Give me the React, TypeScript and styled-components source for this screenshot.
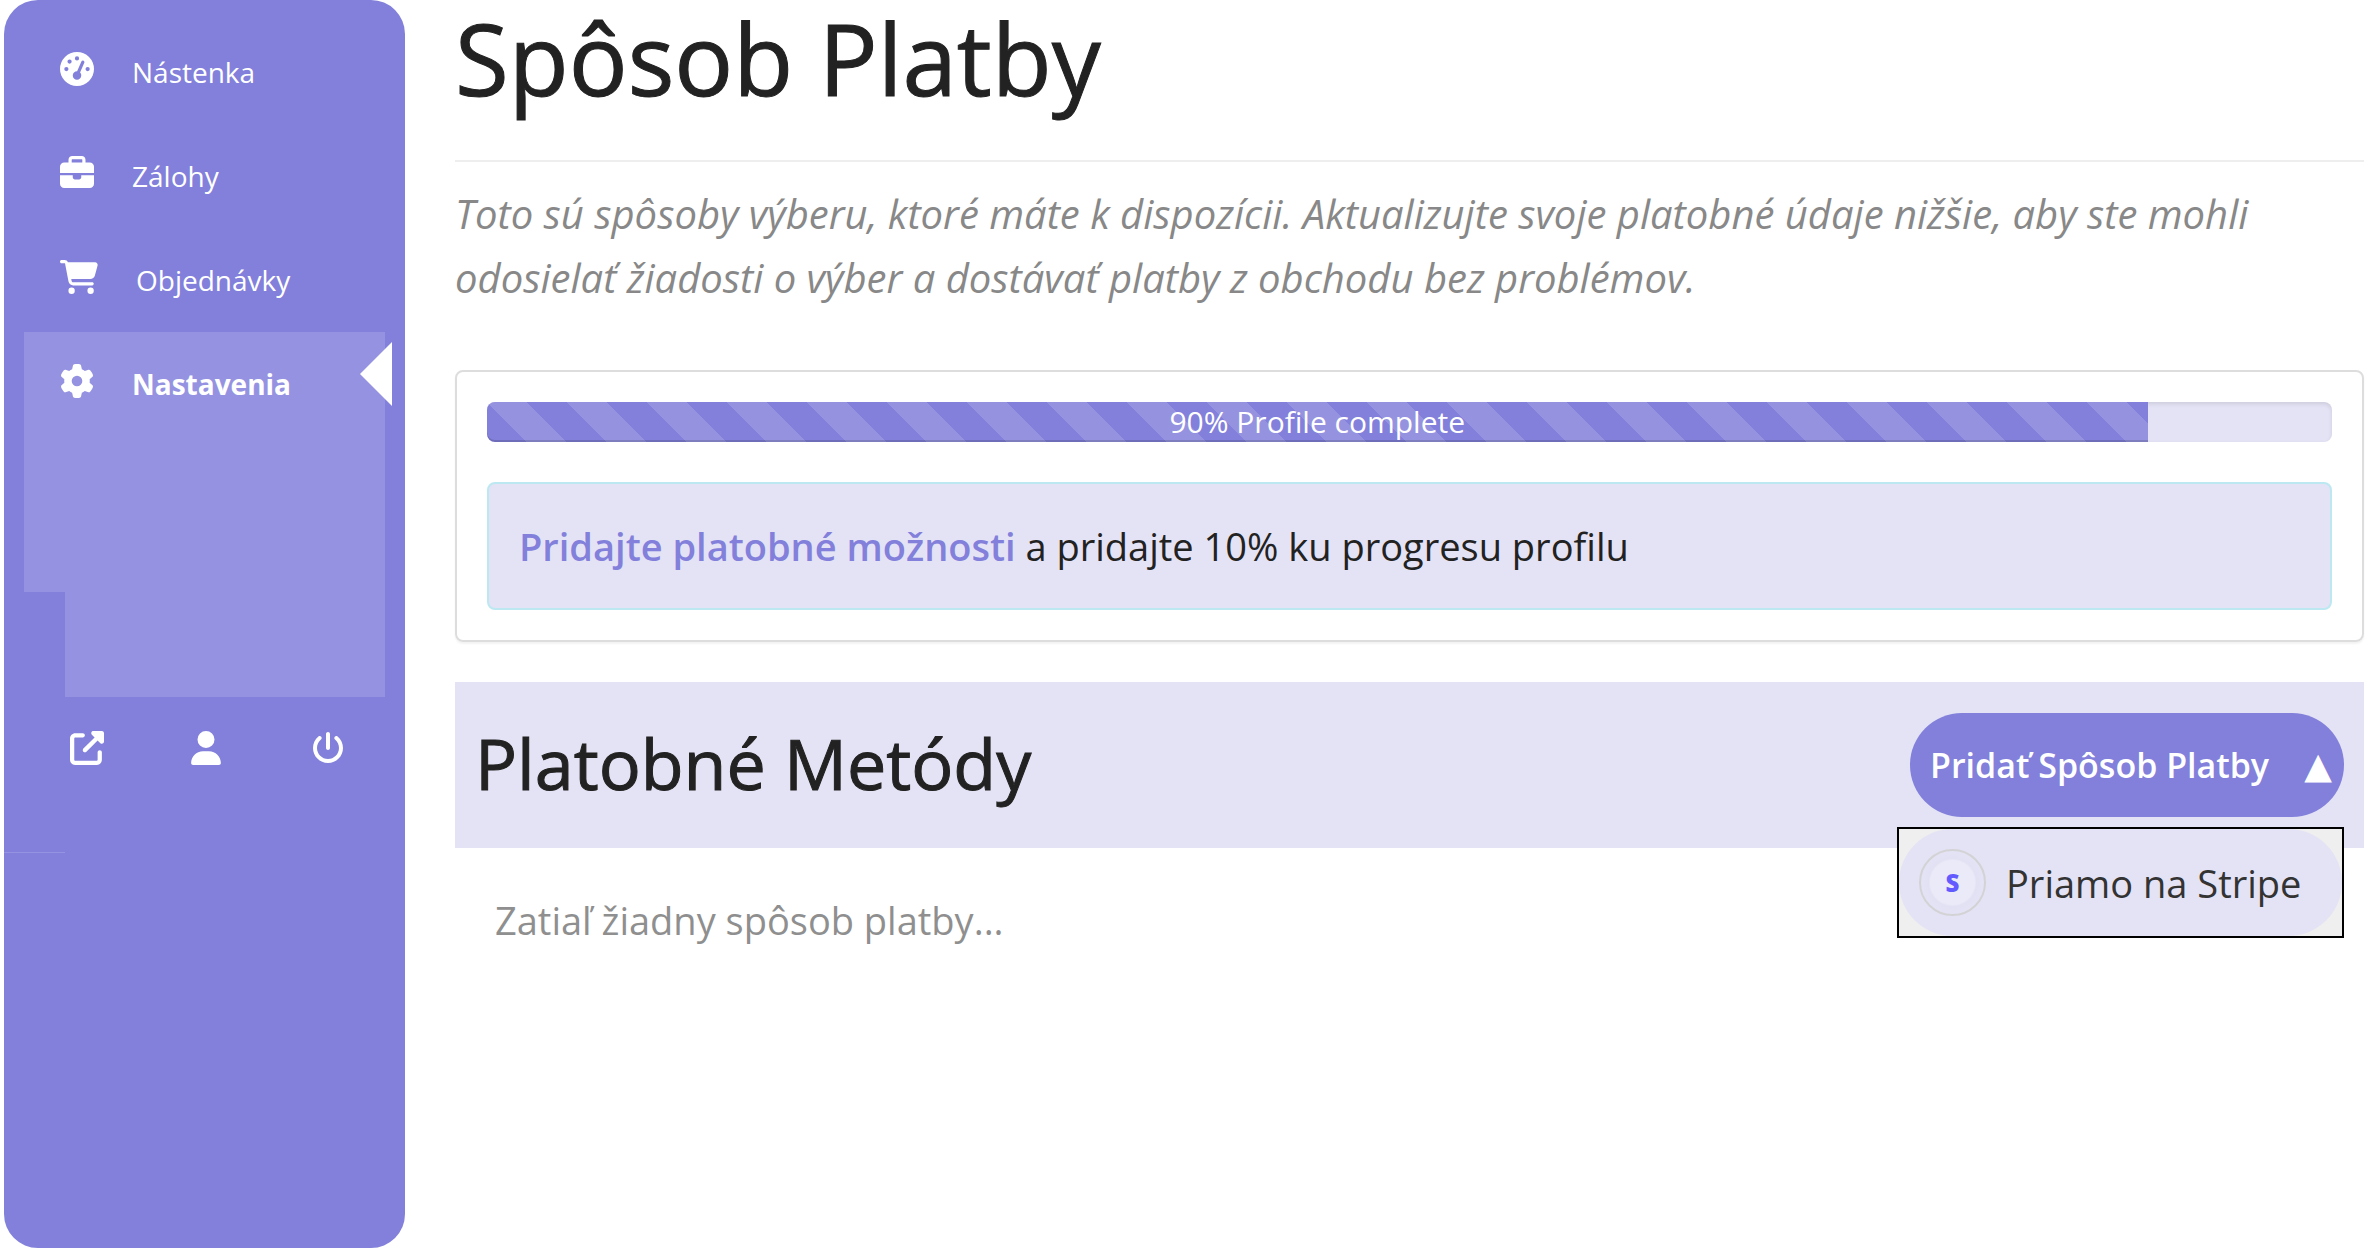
import React from "react";
import styled, { createGlobalStyle, css } from "styled-components";
import {
  FaGaugeHigh,
  FaBriefcase,
  FaCartShopping,
  FaGear,
  FaUpRightFromSquare,
  FaUser,
  FaPowerOff,
} from "react-icons/fa6";

const brand = "#8280db";
const brandLight = "#9593e1";
const tint = "#e4e3f5";

const GlobalStyle = createGlobalStyle`
  *, *::before, *::after { box-sizing: border-box; }
  body {
    margin: 0;
    background: #fff;
    color: #222;
    font-family: "Open Sans", "Noto Sans", sans-serif;
  }
`;

const Page = styled.div`
  display: flex;
  align-items: flex-start;
  gap: 50px;
  padding: 0 4px;
`;

const Sidebar = styled.nav`
  flex: 0 0 401px;
  min-width: 0;
  min-height: calc(100vh - 8px);
  padding-top: 20px;
  border-radius: 34px;
  background: ${brand};
`;

const NavList = styled.ul`
  margin: 0;
  padding: 0 20px;
  list-style: none;
`;

const NavItem = styled.li<{ $active?: boolean }>`
  position: relative;
  ${(p) =>
    p.$active &&
    css`
      height: 260px;
      background: ${brandLight};
      &::after {
        content: "";
        position: absolute;
        top: 10px;
        right: -7px;
        border: 32px solid transparent;
        border-left-width: 0;
        border-right-color: #fff;
      }
    `}
`;

const NavLink = styled.a<{ $active?: boolean; $iconWidth: number }>`
  display: flex;
  align-items: center;
  gap: 38px;
  height: 104px;
  padding-left: 36px;
  color: #fff;
  font-size: 28px;
  font-weight: ${(p) => (p.$active ? 700 : 400)};
  line-height: 40px;
  text-decoration: none;
  svg {
    width: ${(p) => p.$iconWidth}px;
    height: 34px;
    margin-bottom: 6px;
  }
`;

const SubPanel = styled.div`
  height: 105px;
  margin: 0 20px 0 61px;
  background: ${brandLight};
`;

const Shortcuts = styled.div`
  display: grid;
  grid-template-columns: 121px 121px 34px;
  padding: 34px 0 0 66px;
`;

const Shortcut = styled.a<{ $iconWidth: number }>`
  display: block;
  height: 34px;
  color: #fff;
  svg {
    display: block;
    width: ${(p) => p.$iconWidth}px;
    height: 34px;
  }
`;

const SidebarRule = styled.hr`
  width: 61px;
  height: 1px;
  margin: 87px 0 0;
  border: 0;
  background: ${brandLight};
`;

const Main = styled.main`
  flex: 1;
  min-width: 0;
`;

const Title = styled.h1`
  margin: 0;
  padding-bottom: 44px;
  border-bottom: 2px solid #eee;
  font-size: 98px;
  font-weight: 500;
  line-height: 116px;
  -webkit-text-stroke: 1px currentColor;
`;

const Intro = styled.p`
  margin: 20px 0 60px;
  color: #888;
  font-size: 40px;
  font-style: italic;
  line-height: 64px;
`;

const Card = styled.section`
  padding: 30px;
  border: 2px solid #ddd;
  border-radius: 8px;
  box-shadow: 0 2px 2px rgba(0, 0, 0, 0.05);
`;

const Progress = styled.div`
  height: 40px;
  margin-bottom: 40px;
  border-radius: 8px;
  background: ${tint};
  box-shadow: inset 0 2px 4px rgba(0, 0, 0, 0.1);
`;

const ProgressBar = styled.div`
  height: 100%;
  border-radius: 8px 0 0 8px;
  background-color: ${brand};
  background-image: linear-gradient(
    45deg,
    rgba(255, 255, 255, 0.15) 25%,
    transparent 25%,
    transparent 50%,
    rgba(255, 255, 255, 0.15) 50%,
    rgba(255, 255, 255, 0.15) 75%,
    transparent 75%
  );
  background-size: 80px 80px;
  box-shadow: inset 0 -2px 0 rgba(0, 0, 0, 0.15);
  color: #fff;
  font-size: 30px;
  line-height: 40px;
  text-align: center;
`;

const Notice = styled.p`
  margin: 0;
  padding: 30px;
  border: 2px solid #bce8f1;
  border-radius: 8px;
  background: ${tint};
  font-size: 38px;
  line-height: 64px;
  a {
    color: ${brand};
    font-weight: 600;
    text-decoration: none;
  }
`;

const MethodsHeader = styled.header`
  display: flex;
  align-items: center;
  justify-content: space-between;
  margin-top: 40px;
  padding: 31px 20px;
  background: ${tint};
`;

const MethodsTitle = styled.h2`
  margin: 0;
  font-size: 70px;
  font-weight: 500;
  line-height: 100px;
  padding-bottom: 4px;
  -webkit-text-stroke: 1px currentColor;
`;

const Dropdown = styled.div`
  position: relative;
`;

const AddButton = styled.button`
  display: flex;
  align-items: center;
  justify-content: space-between;
  width: 434px;
  height: 104px;
  padding: 0 12px 0 20px;
  border: 0;
  border-radius: 52px;
  background: ${brand};
  color: #fff;
  font-family: inherit;
  font-size: 34px;
  font-weight: 600;
  white-space: nowrap;
`;

const Caret = styled.span`
  font-family: "DejaVu Sans", sans-serif;
  font-size: 36px;
  font-weight: 400;
`;

const Menu = styled.div`
  position: absolute;
  top: 114px;
  right: 0;
  width: 447px;
  border: 2px solid #000;
  background: #efefef;
`;

const MenuOption = styled.button`
  display: flex;
  align-items: center;
  gap: 20px;
  width: 100%;
  height: 107px;
  padding: 0 20px;
  border: 0;
  border-radius: 54px;
  background: ${tint};
  color: #333;
  font-family: inherit;
  font-size: 38px;
  font-weight: 500;
  white-space: nowrap;
`;

const StripeBadge = styled.span`
  display: grid;
  place-items: center;
  flex: 0 0 67px;
  height: 67px;
  border: 2px solid #d3d3d6;
  border-radius: 50%;
  background: radial-gradient(circle, #ebeaf8 22px, #e2e1f3 24px, ${tint} 30px);
  color: #635bff;
  font-size: 24px;
  font-weight: 800;
  line-height: 24px;
`;

const Empty = styled.p`
  margin: 40px;
  color: #8f8f8f;
  font-size: 38px;
  line-height: 64px;
`;

const links = [
  { label: "Nástenka", icon: <FaGaugeHigh />, iconWidth: 34 },
  { label: "Zálohy", icon: <FaBriefcase />, iconWidth: 34 },
  { label: "Objednávky", icon: <FaCartShopping />, iconWidth: 38 },
  { label: "Nastavenia", icon: <FaGear />, iconWidth: 34, active: true },
];

const shortcuts = [
  { label: "Obchod", icon: <FaUpRightFromSquare />, iconWidth: 34 },
  { label: "Profil", icon: <FaUser />, iconWidth: 30 },
  { label: "Odhlásiť", icon: <FaPowerOff />, iconWidth: 32 },
];

export default function App() {
  const complete = 90;
  return (
    <>
      <GlobalStyle />
      <Page>
        <Sidebar>
          <NavList>
            {links.map((l) => (
              <NavItem key={l.label} $active={l.active}>
                <NavLink href="#" $active={l.active} $iconWidth={l.iconWidth}>
                  {l.icon}
                  <span>{l.label}</span>
                </NavLink>
              </NavItem>
            ))}
          </NavList>
          <SubPanel />
          <Shortcuts>
            {shortcuts.map((s) => (
              <Shortcut key={s.label} href="#" aria-label={s.label} $iconWidth={s.iconWidth}>
                {s.icon}
              </Shortcut>
            ))}
          </Shortcuts>
          <SidebarRule />
        </Sidebar>
        <Main>
          <Title>Spôsob Platby</Title>
          <Intro>
            Toto sú spôsoby výberu, ktoré máte k dispozícii. Aktualizujte svoje platobné údaje
            nižšie, aby ste mohli odosielať žiadosti o výber a dostávať platby z obchodu bez
            problémov.
          </Intro>
          <Card>
            <Progress>
              <ProgressBar style={{ width: `${complete}%` }}>{complete}% Profile complete</ProgressBar>
            </Progress>
            <Notice>
              <a href="#">Pridajte platobné možnosti</a> a pridajte 10% ku progresu profilu
            </Notice>
          </Card>
          <MethodsHeader>
            <MethodsTitle>Platobné Metódy</MethodsTitle>
            <Dropdown>
              <AddButton type="button">
                <span>Pridať Spôsob Platby</span>
                <Caret>▲</Caret>
              </AddButton>
              <Menu>
                <MenuOption type="button">
                  <StripeBadge>S</StripeBadge>
                  <span>Priamo na Stripe</span>
                </MenuOption>
              </Menu>
            </Dropdown>
          </MethodsHeader>
          <Empty>Zatiaľ žiadny spôsob platby...</Empty>
        </Main>
      </Page>
    </>
  );
}
